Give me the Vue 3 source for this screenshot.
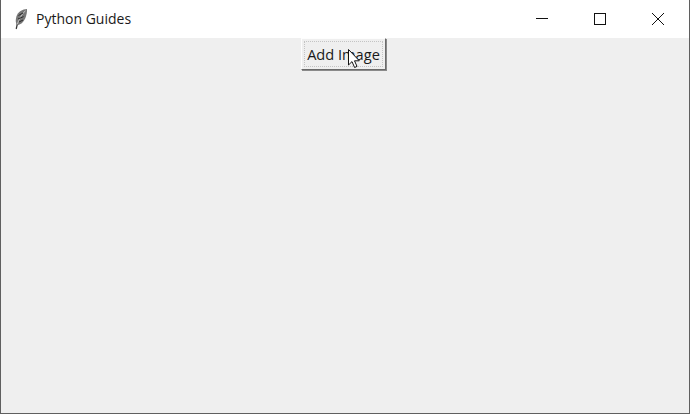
<script setup>
const title = 'Python Guides'
</script>

<template>
  <div class="page">
    <div class="window">
      <header class="titlebar">
        <svg class="feather" width="14" height="22" viewBox="0 0 14 22">
          <path d="M13 1 C8.5 1.2 4 3.6 2.4 8.6 C1.4 12 1.6 14.8 2.8 17.4 C6.6 16.6 9.6 14.2 11.2 10.4 C12.6 7 13.2 4 13 1 Z" fill="#777"/>
          <path d="M11.5 2.6 C8 6 4.8 11 3.2 16.6" fill="none" stroke="#d0d0d0" stroke-width="0.8"/>
          <path d="M4.5 7.5 L9 5 M4 11 L9.5 8.6 M5 14 L9 12" stroke="#2a2a2a" stroke-width="1"/>
          <path d="M3.2 16.5 L2.2 21" stroke="#333" stroke-width="1.2"/>
        </svg>
        <span class="title">{{ title }}</span>
        <div class="controls">
          <button class="ctl" aria-label="Minimize">
            <svg width="14" height="14" viewBox="0 0 14 14"><path d="M1 6.5 H13" stroke="#111" fill="none"/></svg>
          </button>
          <button class="ctl" aria-label="Maximize">
            <svg width="14" height="14" viewBox="0 0 14 14"><rect x="1.5" y="1.5" width="11" height="11" stroke="#111" fill="none"/></svg>
          </button>
          <button class="ctl" aria-label="Close">
            <svg width="14" height="14" viewBox="0 0 14 14"><path d="M1 1 L13 13 M13 1 L1 13" stroke="#111" fill="none"/></svg>
          </button>
        </div>
      </header>
      <main class="client">
        <div class="add-wrap">
          <button class="add">Add Image</button>
          <svg class="cursor" width="14" height="22" viewBox="0 0 14 22">
            <path d="M1.5 1.5 V17 L5 13.6 L7.6 19.5 L10 18.4 L7.5 12.8 H12.3 Z" fill="#fff" stroke="#111" stroke-width="1" stroke-linejoin="miter"/>
          </svg>
        </div>
      </main>
    </div>
  </div>
</template>

<style>
html, body { margin: 0; background: #fff; }
</style>

<style scoped>
.page {
  width: 693px;
  height: 414px;
  overflow: hidden;
  background: #fff;
}
.window {
  box-sizing: border-box;
  width: 690px;
  height: 414px;
  display: flex;
  flex-direction: column;
  border: 1px solid #5f5f5f;
  border-top: 0;
}
.titlebar {
  box-sizing: border-box;
  height: 38px;
  flex: none;
  display: flex;
  align-items: center;
  background: #fff;
  padding: 0 2px 0 13px;
}
.feather { flex: none; }
.title {
  margin: 0 0 2px 8px;
  font: 14px "Open Sans", "Noto Sans", sans-serif;
  color: #1a1a1a;
}
.controls {
  margin-left: auto;
  display: flex;
}
.ctl {
  width: 58px;
  height: 38px;
  padding: 0;
  border: 0;
  background: none;
  display: flex;
  align-items: center;
  justify-content: center;
}
.client {
  flex: 1;
  display: flex;
  justify-content: center;
  align-items: flex-start;
  padding-right: 3px;
  background: #efefef;
}
.add-wrap {
  position: relative;
}
.add {
  display: block;
  box-sizing: border-box;
  width: 85px;
  height: 32px;
  padding: 0;
  background: #efefef;
  border: 1px solid;
  border-color: #fdfdfd #6a6a6a #6a6a6a #fdfdfd;
  box-shadow: 1px 1px 0 #8a8a8a;
  outline: 1px dotted #c4c4c4;
  outline-offset: -4px;
  font: 14.6px "Open Sans", "Noto Sans", sans-serif;
  color: #1a1a1a;
}
.cursor {
  position: absolute;
  left: 46px;
  top: 10px;
}
</style>
